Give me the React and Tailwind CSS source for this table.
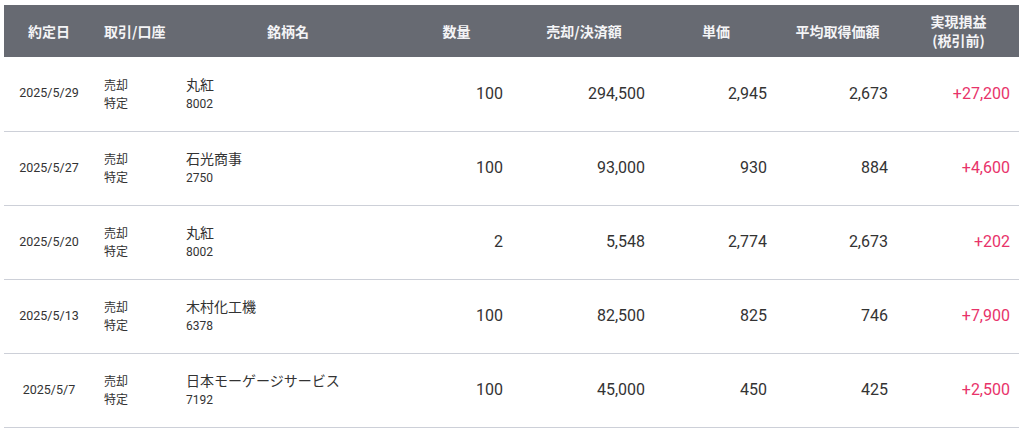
import React from "react";

const rows = [
  { date: "2025/5/29", name: "丸紅", code: "8002", qty: "100", amount: "294,500", price: "2,945", avg: "2,673", pl: "+27,200" },
  { date: "2025/5/27", name: "石光商事", code: "2750", qty: "100", amount: "93,000", price: "930", avg: "884", pl: "+4,600" },
  { date: "2025/5/20", name: "丸紅", code: "8002", qty: "2", amount: "5,548", price: "2,774", avg: "2,673", pl: "+202" },
  { date: "2025/5/13", name: "木村化工機", code: "6378", qty: "100", amount: "82,500", price: "825", avg: "746", pl: "+7,900" },
  { date: "2025/5/7", name: "日本モーゲージサービス", code: "7192", qty: "100", amount: "45,000", price: "450", avg: "425", pl: "+2,500" },
];

const jp = "font-['Noto_Sans_CJK_JP',sans-serif]";
const num = "font-['Roboto','Noto_Sans_CJK_JP',sans-serif]";

function App() {
  return (
    <div className="w-[1024px] h-[433px] bg-white pt-[5px] pl-[4px] overflow-hidden">
      <table className={`table-fixed border-collapse w-[1015px] text-[#333] ${jp}`}>
        <colgroup>
          <col className="w-[90px]" />
          <col className="w-[82px]" />
          <col className="w-[224px]" />
          <col className="w-[113px]" />
          <col className="w-[142px]" />
          <col className="w-[122px]" />
          <col className="w-[121px]" />
          <col className="w-[121px]" />
        </colgroup>
        <thead>
          <tr className="h-[52px] bg-[#676a72] text-[#f4f4f6] text-[14px] font-bold leading-[19px]">
            <th className="text-center">約定日</th>
            <th className="text-left pl-[10px]">取引/口座</th>
            <th className="text-center">銘柄名</th>
            <th className="text-center">数量</th>
            <th className="text-center">売却/決済額</th>
            <th className="text-center">単価</th>
            <th className="text-center">平均取得価額</th>
            <th className="text-center">
              実現損益
              <br />
              (税引前)
            </th>
          </tr>
        </thead>
        <tbody>
          {rows.map((r, i) => (
            <tr key={i} className="h-[74px] border-b border-[#cdd0d8]">
              <td className={`text-center text-[12.5px] ${num}`}>{r.date}</td>
              <td className="pl-[10px] text-[12px] leading-[18px]">
                <div>売却</div>
                <div>特定</div>
              </td>
              <td className="pl-[10px]">
                <div className="text-[14px] leading-[20px]">{r.name}</div>
                <div className={`text-[12px] leading-[20px] ${num}`}>{r.code}</div>
              </td>
              <td className={`text-right pr-[10px] text-[16px] ${num}`}>{r.qty}</td>
              <td className={`text-right pr-[10px] text-[16px] ${num}`}>{r.amount}</td>
              <td className={`text-right pr-[10px] text-[16px] ${num}`}>{r.price}</td>
              <td className={`text-right pr-[10px] text-[16px] ${num}`}>{r.avg}</td>
              <td className={`text-right pr-[9px] text-[16px] text-[#e8336a] ${num}`}>{r.pl}</td>
            </tr>
          ))}
        </tbody>
      </table>
    </div>
  );
}

export default App;
